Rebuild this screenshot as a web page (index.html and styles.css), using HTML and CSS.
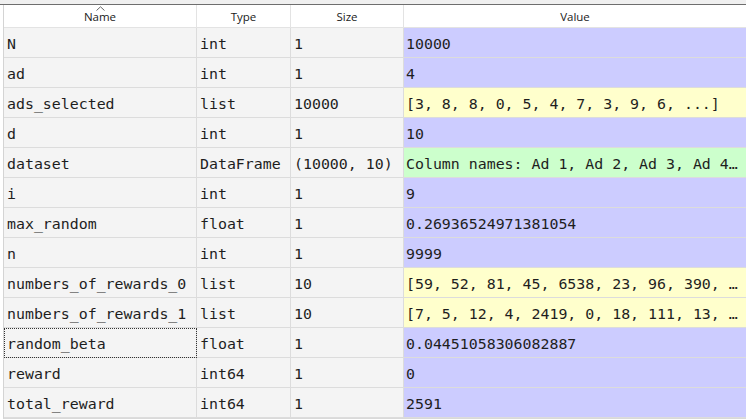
FILE: index.html
```html
<!DOCTYPE html>
<html>
<head>
<meta charset="utf-8">
<link rel="stylesheet" href="styles.css">
</head>
<body>
<div class="topstrip"></div>
<div class="table">
  <div class="hd name"><svg class="caret" width="9" height="5" viewBox="0 0 9 5"><polyline points="0.5,4.5 4.5,0.8 8.5,4.5" fill="none" stroke="#666" stroke-width="1"/></svg>Name</div>
  <div class="hd">Type</div>
  <div class="hd">Size</div>
  <div class="hd last">Value</div>

  <div class="c">N</div><div class="c">int</div><div class="c">1</div><div class="c v blue">10000</div>
  <div class="c">ad</div><div class="c">int</div><div class="c">1</div><div class="c v blue">4</div>
  <div class="c">ads_selected</div><div class="c">list</div><div class="c">10000</div><div class="c v yellow">[3, 8, 8, 0, 5, 4, 7, 3, 9, 6, ...]</div>
  <div class="c">d</div><div class="c">int</div><div class="c">1</div><div class="c v blue">10</div>
  <div class="c">dataset</div><div class="c">DataFrame</div><div class="c">(10000, 10)</div><div class="c v green">Column names: Ad 1, Ad 2, Ad 3, Ad 4…</div>
  <div class="c">i</div><div class="c">int</div><div class="c">1</div><div class="c v blue">9</div>
  <div class="c">max_random</div><div class="c">float</div><div class="c">1</div><div class="c v blue">0.26936524971381054</div>
  <div class="c">n</div><div class="c">int</div><div class="c">1</div><div class="c v blue">9999</div>
  <div class="c">numbers_of_rewards_0</div><div class="c">list</div><div class="c">10</div><div class="c v yellow">[59, 52, 81, 45, 6538, 23, 96, 390, …</div>
  <div class="c">numbers_of_rewards_1</div><div class="c">list</div><div class="c">10</div><div class="c v yellow">[7, 5, 12, 4, 2419, 0, 18, 111, 13, …</div>
  <div class="c focus">random_beta</div><div class="c">float</div><div class="c">1</div><div class="c v blue">0.04451058306082887</div>
  <div class="c">reward</div><div class="c">int64</div><div class="c">1</div><div class="c v blue">0</div>
  <div class="c">total_reward</div><div class="c">int64</div><div class="c">1</div><div class="c v blue">2591</div>
</div>
</body>
</html>
```
FILE: styles.css
```css
html, body {
  margin: 0;
  padding: 0;
  background: #ffffff;
  width: 746px;
  height: 420px;
  overflow: hidden;
}
.topstrip {
  height: 4px;
  background: #f0f0f0;
  border-bottom: 1px solid #6e6e6e;
}
.table {
  margin-left: 3px;
  border-left: 1px solid #d4d4d4;
  display: grid;
  grid-template-columns: 193px 94px 113px 1fr;
  grid-auto-rows: 30px;
  grid-template-rows: 23px;
  border-bottom: 1px solid #d9d9d9;
  width: 743px;
  box-sizing: border-box;
}
.hd {
  position: relative;
  background: #ffffff;
  border-right: 1px solid #e3e3e3;
  border-bottom: 1px solid #e3e3e3;
  font-family: "Open Sans", "Noto Sans", sans-serif;
  font-size: 11.5px;
  color: #1a1a1a;
  display: flex;
  align-items: center;
  justify-content: center;
  padding-top: 1px;
  box-sizing: border-box;
}
.hd.last { border-right: none; }
.caret {
  position: absolute;
  top: 1px;
  left: 50%;
  margin-left: -4px;
}
.c {
  box-sizing: border-box;
  background: #f4f4f4;
  border-right: 1px solid #dcdcdc;
  border-bottom: 1px solid #dcdcdc;
  font-family: "DejaVu Sans Mono", "Liberation Mono", monospace;
  font-size: 14.9px;
  color: #1e1e1e;
  padding: 2px 0 0 3px;
  display: flex;
  align-items: center;
  white-space: nowrap;
  overflow: hidden;
  letter-spacing: 0;
}
.c.v { border-right: none; padding-left: 2px; }
.blue { background: #ccccff; }
.yellow { background: #ffffcc; }
.green { background: #ccffcc; }
.focus { outline: 1px dotted #333; outline-offset: -1px; }
```
